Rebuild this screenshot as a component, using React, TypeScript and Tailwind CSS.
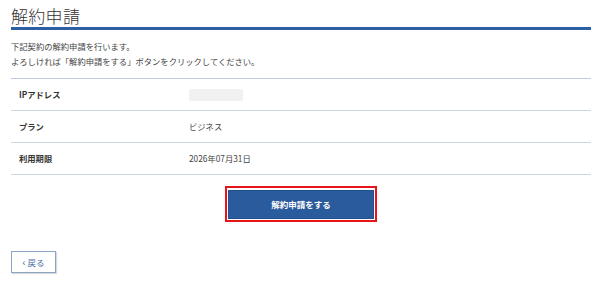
export default function App() {
  const rows = [
    { label: "IPアドレス", value: null },
    { label: "プラン", value: "ビジネス" },
    { label: "利用期限", value: "2026年07月31日" },
  ];
  return (
    <div
      className="w-[600px] h-[283px] bg-white text-[#333]"
      style={{ fontFamily: '"Noto Sans CJK JP", "Noto Sans", sans-serif' }}
    >
      <div className="pl-[11px] w-[591px]">
        <h1 className="pt-[4px] h-[30px] text-[17px] leading-[23px] font-light border-b-[3px] border-[#2c5fa3] tracking-[0.3px]">
          解約申請
        </h1>
        <div className="mt-[9px] text-[8.3px] leading-[15px] text-[#444]">
          <p>下記契約の解約申請を行います。</p>
          <p>よろしければ「解約申請をする」ボタンをクリックしてください。</p>
        </div>
        <div className="mt-[9px] border-t border-[#bccde2]">
          {rows.map((r) => (
            <div
              key={r.label}
              className="flex items-center h-[32px] border-b border-[#c9d4e5] text-[8.3px]"
            >
              <div className="w-[178px] pl-[8px] font-bold text-[#333]">{r.label}</div>
              <div className="text-[#444]">
                {r.value ?? <div className="w-[54px] h-[12px] bg-[#f1f1f1] rounded-[2px]" />}
              </div>
            </div>
          ))}
        </div>
        <div className="flex justify-center mt-[11px]">
          <div className="border-2 border-[#e8141b] p-[1px]">
            <button className="w-[146px] h-[29px] bg-[#2a5b9c] border border-[#234f8a] text-white font-bold text-[8.5px]">
              解約申請をする
            </button>
          </div>
        </div>
        <div className="mt-[29px]">
          <button className="w-[45px] h-[22px] border border-[#8da4c6] text-[#4a6aa0] text-[8.5px] shadow-[1px_1px_1px_rgba(0,0,0,0.15)] flex items-center justify-center gap-[2px]">
            <span className="text-[10px] leading-none">‹</span>
            <span>戻る</span>
          </button>
        </div>
      </div>
    </div>
  );
}
